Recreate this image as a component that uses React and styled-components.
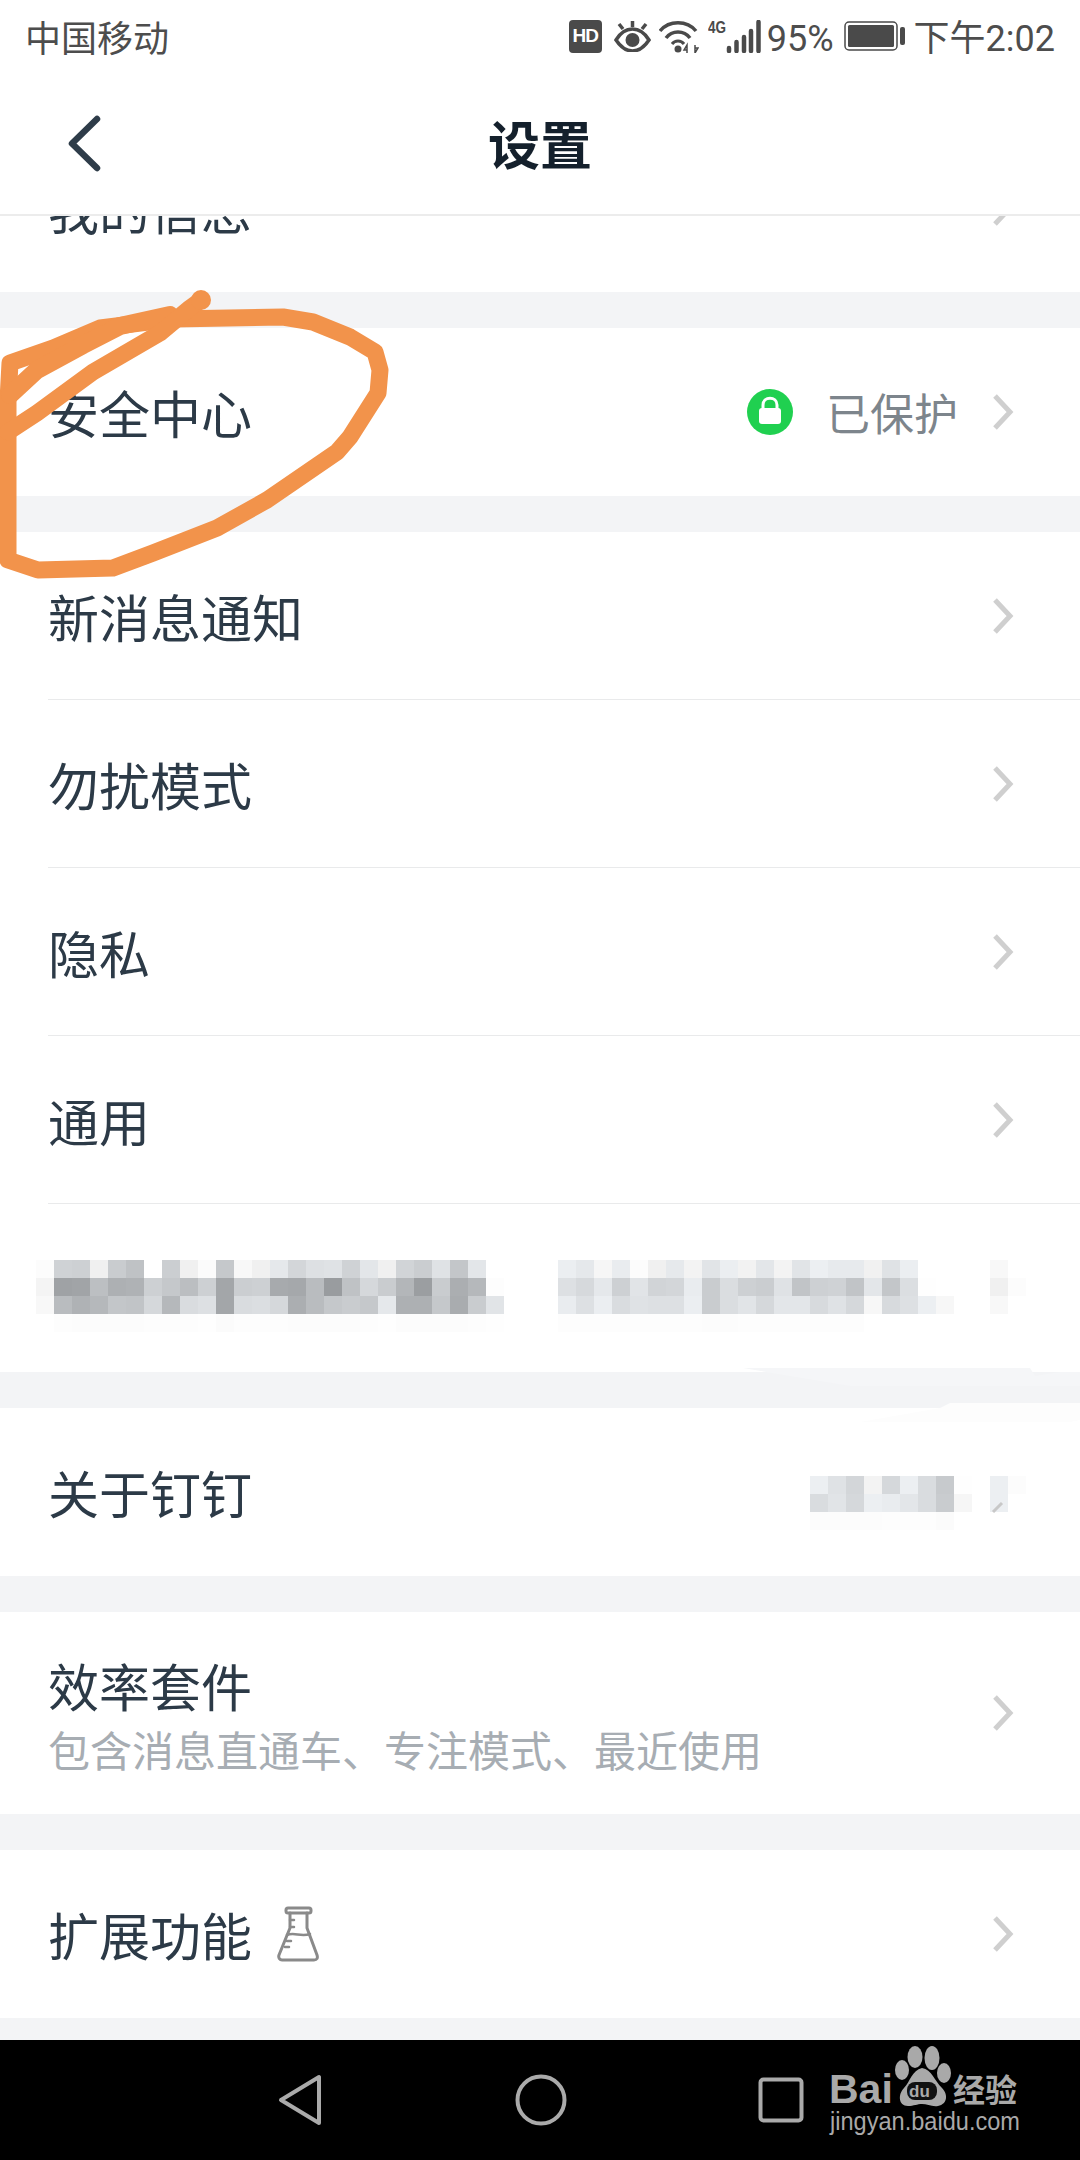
import React from "react";
import styled, { createGlobalStyle } from "styled-components";

const Global = createGlobalStyle`
  html, body { margin: 0; padding: 0; background: #f3f4f6; }
  body { font-family: "Noto Sans CJK SC", "Liberation Sans", sans-serif; }
`;

const Page = styled.div`
  position: relative;
  width: 1080px;
  height: 2160px;
  overflow: hidden;
  background: #f3f4f6;
  display: flex;
  flex-direction: column;
`;

const Header = styled.header`
  height: 214px;
  background: #fff;
  border-bottom: 2px solid #ececec;
  display: flex;
  flex-direction: column;
  flex: none;
`;

const StatusBar = styled.div`
  height: 72px;
  padding: 0 25px 0 25px;
  display: flex;
  align-items: center;
  justify-content: space-between;
  font-family: Roboto, "Noto Sans CJK SC", sans-serif;
  font-size: 36px;
  color: #4d4d4d;
`;

const StatusGroup = styled.div`
  display: flex;
  align-items: center;
`;

const StatusText = styled.span`
  margin-left: ${(p) => p.$left || 0}px;
  padding-top: 6px;
  line-height: 40px;
  white-space: nowrap;
`;

const HdBadge = styled.span`
  width: 33px;
  height: 33px;
  border-radius: 4px;
  background: #4a4a4a;
  color: #fff;
  font-family: "Liberation Sans", sans-serif;
  font-weight: 700;
  font-size: 19px;
  letter-spacing: -1px;
  display: flex;
  align-items: center;
  justify-content: center;
`;

const StatusIcon = styled.svg`
  display: block;
  flex: none;
  margin-left: ${(p) => p.$left || 0}px;
`;

const NavBar = styled.div`
  flex: 1;
  padding-left: 66px;
  display: flex;
  align-items: center;
  position: relative;
`;

const BackIcon = styled.svg`
  display: block;
  flex: none;
`;

const NavTitle = styled.h1`
  position: absolute;
  left: 0;
  right: 0;
  top: 50%;
  transform: translateY(-50%);
  margin: 0;
  text-align: center;
  font-size: 52px;
  line-height: 60px;
  font-weight: 700;
  color: #14202c;
`;

const Section = styled.section`
  background: #fff;
  flex: none;
  margin-top: ${(p) => p.$gap ?? 36}px;
`;

const ClippedSection = styled(Section)`
  height: 76px;
  margin-top: 0;
  overflow: hidden;
  display: flex;
  flex-direction: column;
  justify-content: flex-end;
`;

const Row = styled.div`
  margin-left: 48px;
  height: ${(p) => p.$height || 168}px;
  box-sizing: border-box;
  padding-right: 66px;
  flex: none;
  display: flex;
  align-items: center;
  justify-content: space-between;
  border-bottom: ${(p) => (p.$divider ? "1px solid #e9eaeb" : "none")};
`;

const Label = styled.div`
  display: flex;
  align-items: center;
  font-size: 51px;
  line-height: 60px;
  color: #2c3a47;
`;

const LabelStack = styled.div`
  display: flex;
  flex-direction: column;
  gap: 9px;
  padding-top: 2px;
`;

const Hint = styled.div`
  font-size: 42px;
  line-height: 50px;
  color: #a7adb3;
`;

const Trailing = styled.div`
  display: flex;
  align-items: center;
`;

const StatusValue = styled.span`
  font-size: 44px;
  line-height: 60px;
  color: #7d858c;
  margin: 0 34px 0 33px;
`;

const Chevron = styled.svg`
  display: block;
  flex: none;
`;

const MosaicRow = styled.div`
  box-sizing: content-box;
  padding: 56px 0 0 36px;
  height: 112px;
  display: flex;
  gap: 54px;
`;

const AboutRow = styled(Row)`
  padding-right: 54px;
`;

const Mosaic = styled.svg`
  display: block;
  flex: none;
  align-self: ${(p) => (p.$offset ? "flex-start" : "auto")};
  margin-top: ${(p) => p.$offset || 0}px;
`;

const FlaskIcon = styled.svg`
  display: block;
  margin-left: 25px;
`;

const BottomBar = styled.nav`
  position: absolute;
  left: 0;
  right: 0;
  bottom: 0;
  height: 120px;
  background: #000;
  display: flex;
  align-items: center;
  padding: 0 0 0 278px;
`;

const NavIcon = styled.svg`
  display: block;
  flex: none;
  margin-left: ${(p) => p.$left || 0}px;
`;

const Overlay = styled.svg`
  position: absolute;
  left: 0;
  top: 0;
  pointer-events: none;
`;

const Watermark = styled.svg`
  position: absolute;
  left: 820px;
  top: 2040px;
`;

const Arrow = () => (
  <Chevron width="22" height="38" viewBox="0 0 22 38">
    <path d="M3 3 L18 19 L3 35" fill="none" stroke="#cfcfcf" strokeWidth="5" />
  </Chevron>
);

const hex = (n) => Math.max(0, Math.min(255, n)).toString(16).padStart(2, "0");
const tint = (v) => {
  const n = parseInt(v, 16);
  const k = n < 0xf0 ? 1 : 0;
  return `#${hex(n - 3 * k)}${hex(n)}${hex(n + 3 * k)}`;
};

const Cells = ({ rows, width, height, offset }) => (
  <Mosaic width={width} height={height} viewBox={`0 0 ${width} ${height}`} shapeRendering="crispEdges" $offset={offset}>
    {rows.map((r, y) =>
      r.split(" ").map((v, x) => (
        <rect key={`${x}-${y}`} x={x * 18} y={y * 18} width="18" height="18" fill={tint(v)} />
      ))
    )}
  </Mosaic>
);

const leftRows = [
  "fc d2 d0 f0 cc c2 ff ce f0 fb c8 f8 f0 e8 d6 e0 e2 d2 e6 f0 d4 cd e2 c6 e6 ff",
  "f4 a2 a4 bf b0 b2 d0 c8 be d0 a6 ce d0 aa a8 bc 9c c2 d8 cc b6 9e cc ae b8 fd",
  "f8 bc b2 b8 c6 c4 d8 b8 dc e0 a6 dc de d8 ae bc c8 cc c8 e8 b0 b0 c8 ac cc e4",
  "ff fd fc fc fc fc fd fd fd fe fb fd fd fd fc fc fc fc fd fe fc fc fc fc fd fe",
];
const rightRows = [
  "ee e8 f6 ec fc f0 e9 f3 e4 ee f2 e6 f3 e4 ef ea ea f1 e2 ee ff ff ff ff f8",
  "e0 d9 e8 d0 e4 d4 d6 ec cc dd d0 cd e2 c4 d0 d2 c4 e6 c6 de fe ff ff ff f0 fc",
  "ec e0 ee dc e2 e0 e0 ee cc dd e4 d8 e6 e6 da e2 d8 f7 da e0 ef f7 ff ff f8",
  "fd fd fd fd fd fd fd fd fc fc fd fd fd fd fd fd fd ff ff ff",
];
const aboutRows = [
  "ef e2 d6 f3 d8 ef dc ca fe ff ef fc",
  "dc e4 d8 ef ec e6 dc cc f6 ff ef ff",
  "fc fc fc fc fd fd fd fb ff ff ff ff",
];

export default function App() {
  return (
    <Page>
      <Global />
      <Header>
        <StatusBar>
          <span>中国移动</span>
          <StatusGroup>
            <HdBadge>HD</HdBadge>
            <StatusIcon $left={12} width="37" height="32" viewBox="0 0 37 32" fill="none" stroke="#4a4a4a">
              <path d="M2 20 C8 10 14 9 18.500 9 C23 9 29 10 35 20 C29 29 24 31 18.500 31 C13 31 8 29 2 20Z" strokeWidth="3.500" />
              <circle cx="18.500" cy="20" r="7" fill="#4a4a4a" stroke="none" />
              <path d="M18.500 1 V7 M5 4 L9 9 M32 4 L28 9" strokeWidth="3.500" />
            </StatusIcon>
            <StatusIcon $left={8} width="40" height="33" viewBox="0 0 40 33" fill="none" stroke="#4a4a4a">
              <path d="M1 11 C10 0 28 0 37 11" strokeWidth="3.500" />
              <path d="M7 18 C13 10 25 10 31 18" strokeWidth="3.500" />
              <path d="M13 24 C16 20 22 20 25 24" strokeWidth="3" />
              <circle cx="19" cy="29" r="3.500" fill="#4a4a4a" stroke="none" />
              <path d="M28 33 V25 L25 30 H28 M36 25 V33 L39 28 H36" strokeWidth="1.500" />
            </StatusIcon>
            <StatusIcon $left={9} width="53" height="33" viewBox="0 0 53 33">
              <text x="0" y="13" fontFamily="Liberation Sans, sans-serif" fontWeight="700" fontSize="16" fill="#4a4a4a" textLength="18" lengthAdjust="spacingAndGlyphs">4G</text>
              <path d="M21 28 V31 M28.500 22 V31 M36 17 V31 M43 11 V31 M50.500 2 V31" stroke="#4a4a4a" strokeWidth="4.500" strokeLinecap="round" />
            </StatusIcon>
            <StatusText $left={6}>95%</StatusText>
            <StatusIcon $left={10} width="61" height="30" viewBox="0 0 61 30">
              <rect x="1" y="1" width="52" height="28" rx="4" fill="none" stroke="#4a4a4a" strokeWidth="1.500" />
              <rect x="4" y="4" width="46" height="22" rx="1.500" fill="#4a4a4a" />
              <rect x="56" y="6" width="5" height="18" rx="2" fill="#4a4a4a" />
            </StatusIcon>
            <StatusText $left={9}>下午2:02</StatusText>
          </StatusGroup>
        </StatusBar>
        <NavBar>
          <BackIcon width="38" height="60" viewBox="0 0 38 60">
            <path d="M31 6 L6 30.500 L31 55" fill="none" stroke="#2e3c49" strokeWidth="6.500" strokeLinecap="round" strokeLinejoin="round" />
          </BackIcon>
          <NavTitle>设置</NavTitle>
        </NavBar>
      </Header>

      <ClippedSection>
        <Row>
          <Label>我的信息</Label>
          <Arrow />
        </Row>
      </ClippedSection>

      <Section>
        <Row>
          <Label>安全中心</Label>
          <Trailing>
            <svg width="46" height="46" viewBox="0 0 46 46" style={{ display: "block" }}>
              <circle cx="23" cy="23" r="23" fill="#20d050" />
              <rect x="12" y="19" width="22" height="16" rx="3" fill="#fff" />
              <path d="M16 20 V16 C16 7 30 7 30 16 V20" fill="none" stroke="#fff" strokeWidth="3" />
            </svg>
            <StatusValue>已保护</StatusValue>
            <Arrow />
          </Trailing>
        </Row>
      </Section>

      <Section>
        <Row $divider>
          <Label>新消息通知</Label>
          <Arrow />
        </Row>
        <Row $divider>
          <Label>勿扰模式</Label>
          <Arrow />
        </Row>
        <Row $divider>
          <Label>隐私</Label>
          <Arrow />
        </Row>
        <Row $divider>
          <Label>通用</Label>
          <Arrow />
        </Row>
        <MosaicRow>
          <Cells rows={leftRows} width={468} height={72} />
          <Cells rows={rightRows} width={468} height={72} />
        </MosaicRow>
      </Section>

      <Section>
        <AboutRow>
          <Label>关于钉钉</Label>
          <Cells rows={aboutRows} width={216} height={54} offset={68} />
        </AboutRow>
      </Section>

      <Section>
        <Row $height={202}>
          <LabelStack>
            <Label>效率套件</Label>
            <Hint>包含消息直通车、专注模式、最近使用</Hint>
          </LabelStack>
          <Arrow />
        </Row>
      </Section>

      <Section>
        <Row>
          <Label>
            扩展功能
            <FlaskIcon width="42" height="56" viewBox="0 0 42 56" fill="none" stroke="#8a8a8a" strokeWidth="3" strokeLinejoin="round" strokeLinecap="round">
              <rect x="9" y="2" width="25" height="5" rx="2" />
              <path d="M13 7 V22 L2 49 C1 52 3 54 5 54 H37 C40 54 41 52 40 49 L30 22 V7" />
              <path d="M13 14 H17 M13 21 H17 M10 35 H14 M8 41 H12 M10 29 C17 26 24 31 33 28" strokeWidth="2.500" />
            </FlaskIcon>
          </Label>
          <Arrow />
        </Row>
      </Section>

      <BottomBar>
        <NavIcon width="44" height="52" viewBox="0 0 44 52" fill="none" stroke="#aaa" strokeWidth="4" strokeLinejoin="round">
          <path d="M41 3 V49 L3 26 Z" />
        </NavIcon>
        <NavIcon $left={193} width="52" height="52" viewBox="0 0 52 52" fill="none" stroke="#aaa" strokeWidth="4">
          <circle cx="26" cy="26" r="23.500" />
        </NavIcon>
        <NavIcon $left={191} width="46" height="46" viewBox="0 0 46 46" fill="none" stroke="#aaa" strokeWidth="4">
          <rect x="2.500" y="2.500" width="41" height="41" rx="3" />
        </NavIcon>
      </BottomBar>

      <Overlay width="1080" height="2160" viewBox="0 0 1080 2160">
        <path d="M743 1368 H1030 L1035 1376 L1060 1372 H1080 V1386 H850 Z" fill="#f5f6f8" />
        <path d="M940 1408 L950 1403 H1080 V1420 L1070 1422 H860 Z" fill="#fdfdfd" />
        <path d="M993 1512 L1002 1503" stroke="#c8c8c8" strokeWidth="3" fill="none" />
        <g fill="none" stroke="#f2934b" strokeLinejoin="round" strokeLinecap="round" strokeWidth="17">
          <path d="M10 363 L53 348 L100 328 L173 319 L283 317 L313 322 L350 337 L375 352 L380 370 L378 393 L350 437 L337 452 L267 500 L217 528 L153 553 L113 568 L38 570 L8 560 L8 400 Z" />
          <path d="M10 395 L37 370 L83 345 L120 326 L170 315" strokeWidth="18" />
          <path d="M8 432 L37 413 L93 372 L160 333 L190 308 L201 300" strokeWidth="17" />
        </g>
        <circle cx="201" cy="300" r="10" fill="#f2934b" />
      </Overlay>

      <Watermark width="220" height="110" viewBox="0 0 220 110">
        <text x="9" y="63" fontFamily="Liberation Sans, sans-serif" fontWeight="700" fontSize="41" fill="#a9a9a9">Bai</text>
        <ellipse cx="95" cy="17" rx="7.500" ry="11" fill="#a9a9a9" />
        <ellipse cx="112" cy="18" rx="7.500" ry="12" fill="#a9a9a9" />
        <ellipse cx="82" cy="30" rx="7" ry="10" fill="#a9a9a9" />
        <ellipse cx="124" cy="33" rx="7" ry="10" fill="#a9a9a9" />
        <path d="M102 28 C92 30 90 42 84 48 C78 54 78 66 88 66 C94 66 97 64 102 64 C107 64 112 67 118 66 C128 64 128 54 122 48 C114 40 112 30 102 28Z" fill="#a9a9a9" />
        <rect x="87" y="42" width="30" height="18" rx="8" fill="#111" />
        <text x="89" y="57" fontFamily="Liberation Sans, sans-serif" fontWeight="700" fontSize="17" fill="#a9a9a9">du</text>
        <text x="133" y="62" fontFamily="Noto Sans CJK SC, sans-serif" fontWeight="700" fontSize="32" fill="#a9a9a9">经验</text>
        <text x="10" y="90" fontFamily="Liberation Sans, sans-serif" fontSize="26" fill="#a9a9a9" textLength="190" lengthAdjust="spacingAndGlyphs">jingyan.baidu.com</text>
      </Watermark>
    </Page>
  );
}
